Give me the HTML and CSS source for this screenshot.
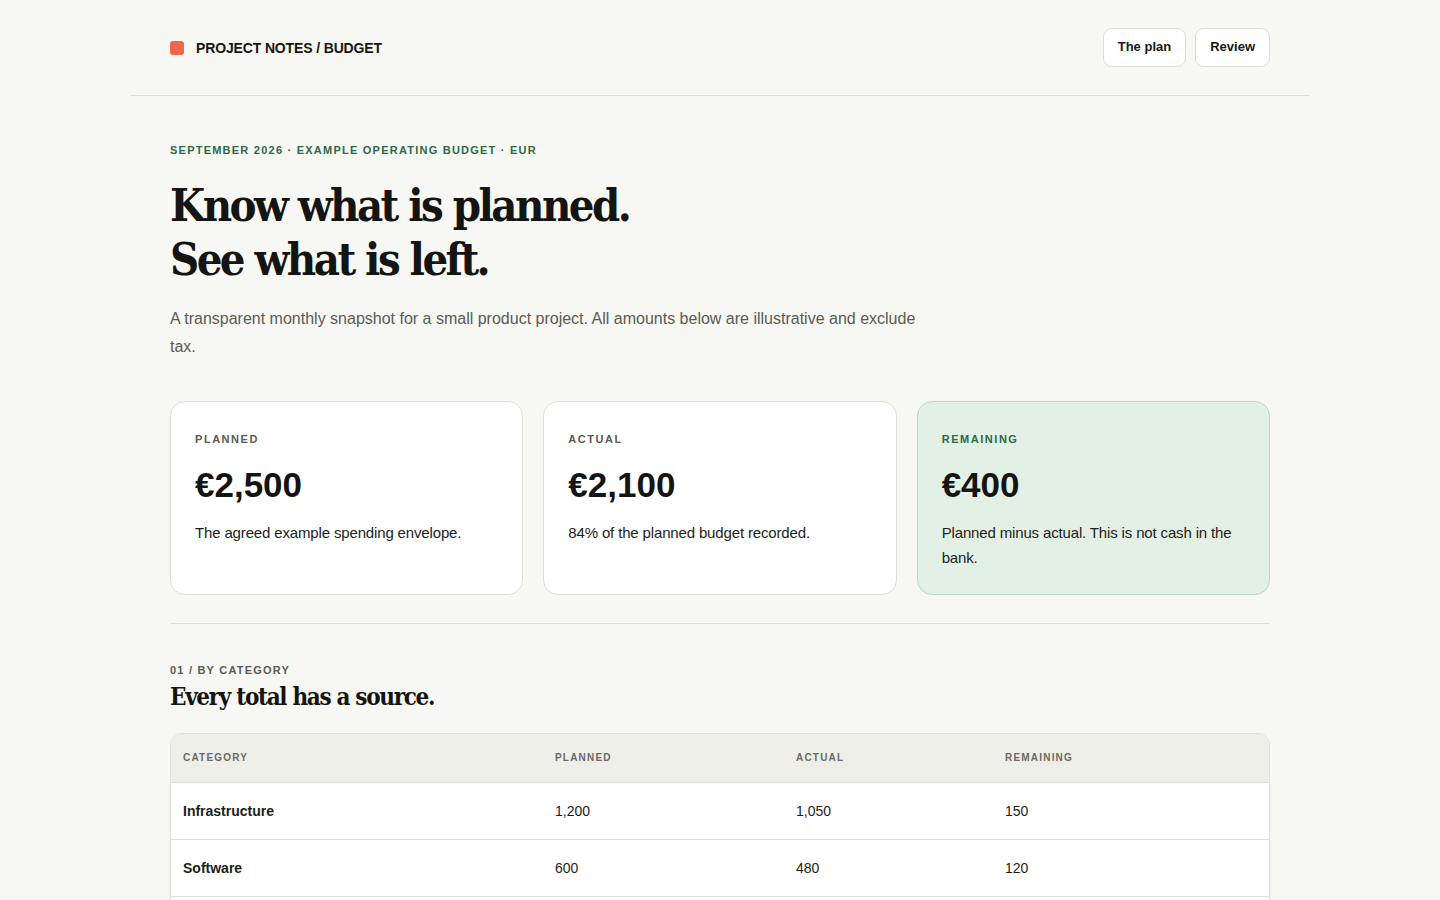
FILE: index.html
```html
<!DOCTYPE html>
<html lang="en">
<head>
<meta charset="utf-8">
<title>Project notes / Budget</title>
<link rel="stylesheet" href="styles.css">
</head>
<body>
<header class="topbar">
  <div class="brand">
    <span class="brand-mark"></span>
    <span class="brand-name">Project notes / Budget</span>
  </div>
  <nav class="nav">
    <a class="nav-btn" href="#plan">The plan</a>
    <a class="nav-btn" href="#review">Review</a>
  </nav>
</header>
<main class="page">
  <section class="hero">
    <p class="eyebrow">September 2026 · Example operating budget · EUR</p>
    <h1 class="title">Know what is planned.<br>See what is left.</h1>
    <p class="lede">A transparent monthly snapshot for a small product project. All amounts below are illustrative and exclude tax.</p>
  </section>
  <section class="cards">
    <article class="card">
      <p class="card-label">Planned</p>
      <p class="card-value">€2,500</p>
      <p class="card-desc">The agreed example spending envelope.</p>
    </article>
    <article class="card">
      <p class="card-label">Actual</p>
      <p class="card-value">€2,100</p>
      <p class="card-desc">84% of the planned budget recorded.</p>
    </article>
    <article class="card card-accent">
      <p class="card-label">Remaining</p>
      <p class="card-value">€400</p>
      <p class="card-desc">Planned minus actual. This is not cash in the bank.</p>
    </article>
  </section>
  <section class="section">
    <p class="section-kicker">01 / By category</p>
    <h2 class="section-title">Every total has a source.</h2>
    <div class="table-wrap">
      <table class="table">
        <thead>
          <tr>
            <th class="col-cat">Category</th>
            <th class="col-plan">Planned</th>
            <th class="col-act">Actual</th>
            <th>Remaining</th>
          </tr>
        </thead>
        <tbody>
          <tr><td class="cat">Infrastructure</td><td>1,200</td><td>1,050</td><td>150</td></tr>
          <tr><td class="cat">Software</td><td>600</td><td>480</td><td>120</td></tr>
          <tr><td class="cat">Research</td><td>400</td><td>390</td><td>10</td></tr>
          <tr><td class="cat">Contingency</td><td>300</td><td>180</td><td>120</td></tr>
        </tbody>
      </table>
    </div>
  </section>
</main>
</body>
</html>
```
FILE: styles.css
```css
* { box-sizing: border-box; }
html, body { margin: 0; padding: 0; }
body {
  background: #f7f7f3;
  color: #161614;
  font-family: "Liberation Sans", Arial, sans-serif;
}
p, h1, h2 { margin: 0; }

.topbar {
  width: 1180px;
  margin: 0 auto;
  height: 96px;
  padding: 0 40px;
  display: flex;
  align-items: center;
  justify-content: space-between;
  border-bottom: 1px solid #dddcd5;
}
.brand { display: flex; align-items: center; gap: 12px; }
.brand-mark {
  width: 14px; height: 14px;
  border-radius: 3px;
  background: #f2664a;
}
.brand-name {
  font-size: 14px;
  font-weight: 700;
  text-transform: uppercase;
  letter-spacing: -0.01em;
  color: #161614;
}
.nav { display: flex; gap: 9px; margin-top: -1px; }
.nav-btn {
  display: inline-flex;
  align-items: center;
  height: 39px;
  padding: 0 14px 1px;
  background: #ffffff;
  border: 1px solid #dfded8;
  border-radius: 9px;
  color: #161614;
  font-size: 13px;
  font-weight: 700;
  text-decoration: none;
}

.page { width: 1100px; margin: 0 auto; }

.hero { padding-top: 47px; }
.eyebrow {
  font-size: 11px;
  font-weight: 700;
  letter-spacing: 0.112em;
  text-transform: uppercase;
  color: #2b6a45;
  line-height: 14px;
}
.title {
  margin-top: 22px;
  font-family: "DejaVu Serif Condensed", "DejaVu Serif", Georgia, serif;
  font-stretch: condensed;
  font-weight: 700;
  font-size: 45px;
  line-height: 54px;
  letter-spacing: -0.057em;
  color: #141412;
}
.lede {
  margin-top: 18px;
  max-width: 752px;
  font-size: 16px;
  line-height: 28px;
  color: #5b5b55;
}

.cards {
  margin-top: 40px;
  display: grid;
  grid-template-columns: repeat(3, 1fr);
  gap: 20px;
  padding-bottom: 28px;
  border-bottom: 1px solid #dddcd5;
}
.card {
  background: #ffffff;
  border: 1px solid #dfded8;
  border-radius: 15px;
  padding: 30px 24px 24px;
}
.card-label {
  font-size: 11px;
  font-weight: 700;
  letter-spacing: 0.14em;
  text-transform: uppercase;
  color: #5b5b55;
  line-height: 14px;
}
.card-value {
  margin-top: 20px;
  font-size: 35px;
  font-weight: 700;
  letter-spacing: 0;
  line-height: 38px;
  color: #141412;
}
.card-desc {
  margin-top: 16px;
  font-size: 15px;
  line-height: 25px;
  letter-spacing: -0.01em;
  color: #1d1d1a;
}
.card-accent {
  background: #e3f0e6;
  border-color: #b7d7c1;
}
.card-accent .card-label { color: #2b6a45; }

.section { padding-top: 39px; }
.section-kicker {
  font-size: 11px;
  font-weight: 700;
  letter-spacing: 0.11em;
  text-transform: uppercase;
  color: #5b5b55;
  line-height: 14px;
}
.section-title {
  margin-top: 4px;
  font-family: "DejaVu Serif Condensed", "DejaVu Serif", Georgia, serif;
  font-stretch: condensed;
  font-size: 24px;
  font-weight: 700;
  line-height: 32px;
  letter-spacing: -0.055em;
  color: #141412;
}
.table-wrap {
  margin-top: 20px;
  border: 1px solid #dfded8;
  border-radius: 12px;
  overflow: hidden;
  background: #ffffff;
}
.table {
  width: 100%;
  border-collapse: collapse;
  table-layout: fixed;
}
.col-cat { width: 372px; }
.col-plan { width: 241px; }
.col-act { width: 209px; }
.table th {
  background: #efefea;
  text-align: left;
  height: 48px;
  padding: 0 12px;
  font-size: 10px;
  font-weight: 700;
  letter-spacing: 0.12em;
  text-transform: uppercase;
  color: #6a6a63;
  border-bottom: 1px solid #dfded8;
}
.table td {
  height: 57px;
  padding: 0 12px;
  font-size: 14px;
  color: #1d1d1a;
  border-bottom: 1px solid #dfded8;
}
.table td.cat { font-weight: 700; }
```
